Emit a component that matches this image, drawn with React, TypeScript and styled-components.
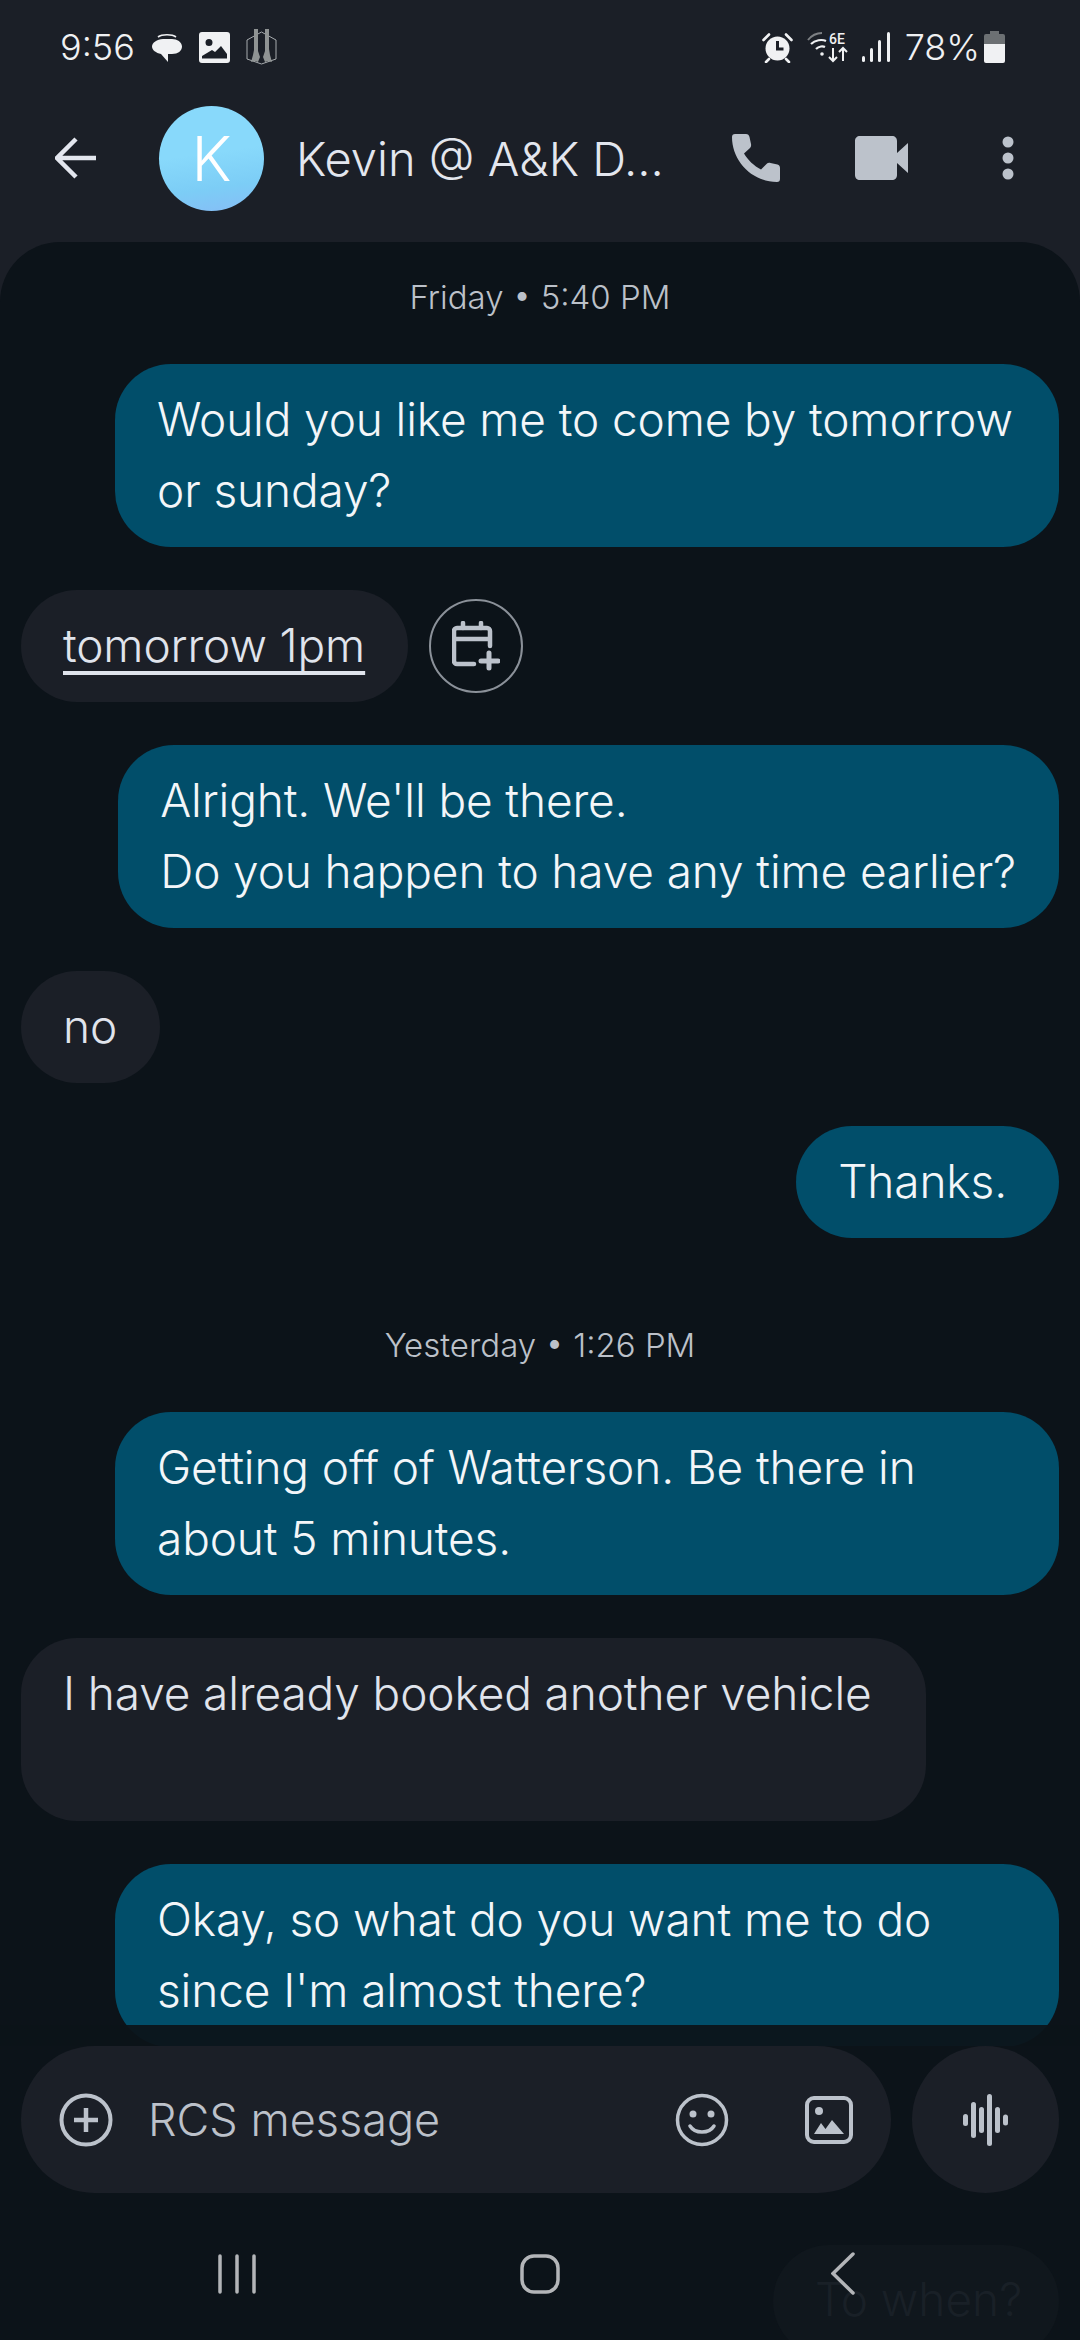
import React from "react";
import styled, { createGlobalStyle } from "styled-components";

const GlobalStyle = createGlobalStyle`
  html, body {
    margin: 0;
    padding: 0;
    background: #0c1319;
  }
  * {
    box-sizing: border-box;
  }
`;

const FONT = `"Inter", "Roboto", "Liberation Sans", sans-serif`;

const Page = styled.div`
  position: relative;
  width: 1080px;
  height: 2340px;
  overflow: hidden;
  display: flex;
  flex-direction: column;
  background: #0c1319;
  font-family: ${FONT};
`;

const Header = styled.header`
  height: 302px;
  margin-bottom: -60px;
  background: #1b1f27;
  flex-shrink: 0;
`;

const StatusBar = styled.div`
  height: 94px;
  padding: 0 75px 0 60px;
  display: flex;
  align-items: center;
  color: #f0f1f3;
  font-size: 36px;
  font-weight: 300;
`;

const StatusGroup = styled.div<{ $gap: number }>`
  display: flex;
  align-items: center;
  gap: ${(p) => p.$gap}px;
`;

const Spacer = styled.div`
  flex: 1;
`;

const Percent = styled.span`
  margin-left: 1px;
  margin-right: -10px;
`;

const TopBar = styled.div`
  height: 128px;
  padding: 0 0 0 55px;
  display: flex;
  align-items: center;
`;

const Avatar = styled.div`
  width: 105px;
  height: 105px;
  margin-left: 62px;
  border-radius: 50%;
  flex-shrink: 0;
  display: flex;
  align-items: center;
  justify-content: center;
  color: #fff;
  font-size: 62px;
  font-weight: 300;
  background: linear-gradient(172deg, #88d9fb 45%, #7ccdf6 75%, #86bdf6 100%);
`;

const Title = styled.div`
  width: 420px;
  margin-left: 32px;
  color: #e3e6ee;
  font-size: 47px;
  font-weight: 300;
  white-space: nowrap;
`;

const TopAction = styled.div<{ $w: number }>`
  width: ${(p) => p.$w}px;
  display: flex;
  justify-content: center;
`;

const Thread = styled.main`
  position: relative;
  z-index: 1;
  height: 1804px;
  flex-shrink: 0;
  overflow: hidden;
  border-radius: 60px 60px 0 0;
  background: #0c1319;
  padding: 0 21px;
  display: flex;
  flex-direction: column;
  gap: 43px;
`;

const ThreadFade = styled.div`
  position: absolute;
  left: 0;
  right: 0;
  bottom: 0;
  height: 21px;
  background: rgba(12, 19, 25, 0.93);
`;

const DateLabel = styled.div<{ $top: number; $bottom: number }>`
  margin-top: ${(p) => p.$top}px;
  margin-bottom: ${(p) => p.$bottom}px;
  height: 40px;
  line-height: 40px;
  text-align: center;
  color: #bcc1c9;
  font-size: 33px;
  font-weight: 300;
`;

const Row = styled.div<{ $out?: boolean }>`
  display: flex;
  align-items: center;
  gap: 21px;
  justify-content: ${(p) => (p.$out ? "flex-end" : "flex-start")};
  flex-shrink: 0;
`;

const Bubble = styled.div<{ $out?: boolean; $pr?: number }>`
  max-width: 944px;
  padding: 20px ${(p) => p.$pr ?? 43}px 21px 42px;
  border-radius: 56px;
  font-size: 46px;
  font-weight: 300;
  letter-spacing: -0.12px;
  line-height: 71px;
  color: ${(p) => (p.$out ? "#f3f6f9" : "#e0e4ec")};
  background: ${(p) => (p.$out ? "#014e6a" : "#1b1f27")};
`;

const LinkText = styled.span`
  text-decoration: underline;
  text-decoration-thickness: 4px;
  text-decoration-skip-ink: none;
  text-underline-offset: 9px;
`;

const CalendarButton = styled.div`
  width: 94px;
  height: 94px;
  border-radius: 50%;
  border: 2px solid #8b9199;
  display: flex;
  align-items: center;
  justify-content: center;
`;

const Composer = styled.div`
  height: 147px;
  padding: 0 21px;
  display: flex;
  gap: 21px;
  flex-shrink: 0;
`;

const InputPill = styled.div`
  flex: 1;
  height: 147px;
  padding: 0 38px;
  border-radius: 74px;
  background: #1b1f27;
  display: flex;
  align-items: center;
  color: #bcc1ca;
  font-size: 45px;
  font-weight: 300;
`;

const Placeholder = styled.span`
  flex: 1;
  margin-left: 35px;
`;

const InputIcon = styled.div<{ $ml: number }>`
  margin-left: ${(p) => p.$ml}px;
  display: flex;
`;

const MicButton = styled.div`
  width: 147px;
  height: 147px;
  border-radius: 50%;
  background: #1b1f27;
  display: flex;
  align-items: center;
  justify-content: center;
`;

const NavBar = styled.nav`
  flex: 1;
  padding: 14px 85px 0;
  display: grid;
  grid-template-columns: repeat(3, 1fr);
  align-items: center;
  justify-items: center;
`;

const GhostBubble = styled.div`
  position: absolute;
  left: 773px;
  top: 2245px;
  width: 286px;
  height: 112px;
  padding: 19px 0 0 42px;
  border-radius: 56px;
  background: #10171d;
  color: #192027;
  font-size: 46px;
  font-weight: 300;
  line-height: 71px;
`;

const NavSlot = styled.div`
  position: relative;
  z-index: 1;
  display: flex;
`;

function MessagesIcon() {
  return (
    <svg width="32" height="32" viewBox="0 0 32 32">
      <path d="M7 6c4-3 14-3 18 0" fill="none" stroke="#f0f1f3" strokeWidth="1.6" />
      <path d="M12 8h9c5 0 10 3 10 7.500S27 23 21 23h-4v8l-7-8C5 22 1 19 1 15.500S6 8 12 8z" fill="#f0f1f3" />
    </svg>
  );
}

function PictureIcon() {
  return (
    <svg width="31" height="31" viewBox="0 0 31 31">
      <path fillRule="evenodd" fill="#f0f1f3" d="M3 0h25a3 3 0 0 1 3 3v25a3 3 0 0 1-3 3H3a3 3 0 0 1-3-3V3a3 3 0 0 1 3-3zM10 7a3.500 3.500 0 1 0 0 7 3.500 3.500 0 0 0 0-7zM3 26.500h25V22l-6-8-6 6-3-2-10 6z" />
    </svg>
  );
}

function PistolsIcon() {
  return (
    <svg width="31" height="36" viewBox="0 0 31 36">
      <path d="M15.500 3 30 11v19l-14.500 5L1 30V11z" fill="none" stroke="#a8acaf" strokeWidth="1" />
      <path d="M8 0h4v22l2 6-2 5-3-1-4 1 2-7 1-5zM19 0h4v20l1 6 2 7-4-1-3 1-2-5 2-6z" fill="#8f9393" />
    </svg>
  );
}

function AlarmIcon() {
  return (
    <svg width="31" height="31" viewBox="0 0 31 31">
      <path d="M1.500 8 7 2.500M29.500 8 24 2.500M7 27l-3 3M24 27l3 3" stroke="#f0f1f3" strokeWidth="2.600" strokeLinecap="round" />
      <circle cx="15.500" cy="16.500" r="12" fill="#f0f1f3" />
      <path d="M15.500 9v8h6" fill="none" stroke="#1b1f27" strokeWidth="3" />
    </svg>
  );
}

function WifiIcon() {
  return (
    <svg width="41" height="32" viewBox="0 0 41 32">
      <path d="M1 9C5 4 10 2 15 2" fill="none" stroke="#7d8084" strokeWidth="2" />
      <path d="M4 13c4-4 11-5 15-3M9 18c3-3 7-3 9-2" fill="none" stroke="#f0f1f3" strokeWidth="2.200" />
      <circle cx="15" cy="23" r="1.800" fill="#f0f1f3" />
      <text x="22" y="13" fill="#f0f1f3" fontFamily="Roboto, sans-serif" fontSize="14" fontWeight="500">6E</text>
      <path d="M26 17v13M22 26l4 4 4-4M36 30V17M32 21l4-4 4 4" fill="none" stroke="#f0f1f3" strokeWidth="2" />
    </svg>
  );
}

function SignalIcon() {
  return (
    <svg width="28" height="30" viewBox="0 0 28 30">
      <rect x="0" y="24" width="3" height="6" rx="1.500" fill="#f0f1f3" />
      <rect x="8" y="16" width="3" height="14" rx="1.500" fill="#f0f1f3" />
      <rect x="16" y="8" width="3" height="22" rx="1.500" fill="#f0f1f3" />
      <rect x="25" y="0" width="3" height="30" rx="1.500" fill="#f0f1f3" />
    </svg>
  );
}

function BatteryIcon() {
  return (
    <svg width="21" height="32" viewBox="0 0 21 32">
      <path d="M6 0h9v3h4a2 2 0 0 1 2 2v8H0V5a2 2 0 0 1 2-2h4z" fill="#6c7073" />
      <path d="M0 13h21v17a2 2 0 0 1-2 2H2a2 2 0 0 1-2-2z" fill="#f0f1f3" />
    </svg>
  );
}

function BackArrow() {
  return (
    <svg width="42" height="42" viewBox="0 0 42 42">
      <path d="M41 21H3M21 2 2 21l19 19" fill="none" stroke="#e3e6ee" strokeWidth="4.500" />
    </svg>
  );
}

function PhoneIcon() {
  return (
    <svg width="48" height="48" viewBox="0 0 48 48">
      <path d="M3 0h11c2 0 3 1 3.500 3l1.500 7c.3 1.600 0 3-1 4l-6 5.500C16 26 22 32 29 35.500l5.500-5.500c1-1 2.500-1.400 4-1l7 1.500c1.700.4 2.500 1.500 2.500 3.500v11c0 2-1 3-3 3C20 48 0 27 0 3c0-2 1-3 3-3z" fill="#bcc2cb" />
    </svg>
  );
}

function VideoIcon() {
  return (
    <svg width="53" height="44" viewBox="0 0 53 44">
      <path d="M5 0h32c3 0 5 2 5 5v12L53 7v30L42 27v12c0 3-2 5-5 5H5c-3 0-5-2-5-5V5c0-3 2-5 5-5z" fill="#bcc2cb" />
    </svg>
  );
}

function MoreIcon() {
  return (
    <svg width="12" height="44" viewBox="0 0 12 44">
      <circle cx="6" cy="6" r="5.500" fill="#bcc2cb" />
      <circle cx="6" cy="22" r="5.500" fill="#bcc2cb" />
      <circle cx="6" cy="38" r="5.500" fill="#bcc2cb" />
    </svg>
  );
}

function CalendarPlusIcon() {
  return (
    <svg width="48" height="50" viewBox="0 0 48 50">
      <path d="M11 2v5M29 2v5" stroke="#bcc2cb" strokeWidth="4.500" strokeLinecap="round" />
      <path d="M38 25V10a3 3 0 0 0-3-3H5a3 3 0 0 0-3 3v30a3 3 0 0 0 3 3h17M2 18h36" fill="none" stroke="#bcc2cb" strokeWidth="4.500" strokeLinecap="round" />
      <path d="M37 32v15M29 40h17" stroke="#bcc2cb" strokeWidth="5" strokeLinecap="round" />
    </svg>
  );
}

function PlusCircleIcon() {
  return (
    <svg width="54" height="54" viewBox="0 0 54 54">
      <circle cx="27" cy="27" r="24.500" fill="none" stroke="#bcc2cb" strokeWidth="4" />
      <path d="M27 15v24M15 27h24" stroke="#bcc2cb" strokeWidth="4.500" />
    </svg>
  );
}

function SmileIcon() {
  return (
    <svg width="54" height="54" viewBox="0 0 54 54">
      <circle cx="27" cy="27" r="24.500" fill="none" stroke="#bcc2cb" strokeWidth="3.500" />
      <circle cx="18" cy="21" r="3.500" fill="#bcc2cb" />
      <circle cx="36" cy="21" r="3.500" fill="#bcc2cb" />
      <path d="M15 33c5 8 19 8 24 0" fill="none" stroke="#bcc2cb" strokeWidth="3.500" strokeLinecap="round" />
    </svg>
  );
}

function GalleryIcon() {
  return (
    <svg width="48" height="48" viewBox="0 0 48 48">
      <rect x="2" y="2" width="44" height="44" rx="7" fill="none" stroke="#bcc2cb" strokeWidth="4" />
      <circle cx="14" cy="15" r="4" fill="#bcc2cb" />
      <path d="M9 38 16 27l4.500 6L27 24l12 14z" fill="#bcc2cb" />
    </svg>
  );
}

function WaveIcon() {
  const heights = [12, 36, 26, 52, 26, 11];
  return (
    <svg width="45" height="54" viewBox="0 0 45 54">
      {heights.map((h, i) => (
        <rect key={i} x={i * 8} y={27 - h / 2} width="5" height={h} rx="2.500" fill="#bcc2cb" />
      ))}
    </svg>
  );
}

function RecentsIcon() {
  return (
    <svg width="38" height="40" viewBox="0 0 38 40">
      <path d="M2 2v36M19 2v36M36 2v36" stroke="#b3b5b8" strokeWidth="3.500" strokeLinecap="round" />
    </svg>
  );
}

function HomeIcon() {
  return (
    <svg width="40" height="40" viewBox="0 0 40 40">
      <rect x="2" y="2" width="36" height="36" rx="12" fill="none" stroke="#b3b5b8" strokeWidth="3.500" />
    </svg>
  );
}

function NavBackIcon() {
  return (
    <svg width="24" height="43" viewBox="0 0 24 43">
      <path d="M22 2 2 21.500 22 41" fill="none" stroke="#b3b5b8" strokeWidth="3.500" strokeLinecap="round" />
    </svg>
  );
}

export default function App() {
  return (
    <Page>
      <GlobalStyle />
      <Header>
        <StatusBar>
          <StatusGroup $gap={16}>
            <span>9:56</span>
            <MessagesIcon />
            <PictureIcon />
            <PistolsIcon />
          </StatusGroup>
          <Spacer />
          <StatusGroup $gap={14}>
            <AlarmIcon />
            <WifiIcon />
            <SignalIcon />
            <Percent>78%</Percent>
            <BatteryIcon />
          </StatusGroup>
        </StatusBar>
        <TopBar>
          <BackArrow />
          <Avatar>K</Avatar>
          <Title>Kevin @ A&amp;K D...</Title>
          <TopAction $w={80}><PhoneIcon /></TopAction>
          <TopAction $w={170}><VideoIcon /></TopAction>
          <TopAction $w={83}><MoreIcon /></TopAction>
        </TopBar>
      </Header>

      <Thread>
        <DateLabel $top={35} $bottom={4}>Friday • 5:40 PM</DateLabel>
        <Row $out>
          <Bubble $out>Would you like me to come by tomorrow or sunday?</Bubble>
        </Row>
        <Row>
          <Bubble><LinkText>tomorrow 1pm</LinkText></Bubble>
          <CalendarButton><CalendarPlusIcon /></CalendarButton>
        </Row>
        <Row $out>
          <Bubble $out>Alright. We'll be there.<br />Do you happen to have any time earlier?</Bubble>
        </Row>
        <Row>
          <Bubble>no</Bubble>
        </Row>
        <Row $out>
          <Bubble $out $pr={52}>Thanks.</Bubble>
        </Row>
        <DateLabel $top={44} $bottom={4}>Yesterday • 1:26 PM</DateLabel>
        <Row $out>
          <Bubble $out>Getting off of Watterson. Be there in about 5 minutes.</Bubble>
        </Row>
        <Row>
          <Bubble $pr={54}>I have already booked another vehicle<br />&nbsp;</Bubble>
        </Row>
        <Row $out>
          <Bubble $out>Okay, so what do you want me to do since I'm almost there?</Bubble>
        </Row>
        <ThreadFade />
      </Thread>

      <Composer>
        <InputPill>
          <PlusCircleIcon />
          <Placeholder>RCS message</Placeholder>
          <InputIcon $ml={0}><SmileIcon /></InputIcon>
          <InputIcon $ml={76}><GalleryIcon /></InputIcon>
        </InputPill>
        <MicButton><WaveIcon /></MicButton>
      </Composer>

      <NavBar>
        <NavSlot><RecentsIcon /></NavSlot>
        <NavSlot><HomeIcon /></NavSlot>
        <NavSlot><NavBackIcon /></NavSlot>
      </NavBar>
      <GhostBubble>To when?</GhostBubble>
    </Page>
  );
}
